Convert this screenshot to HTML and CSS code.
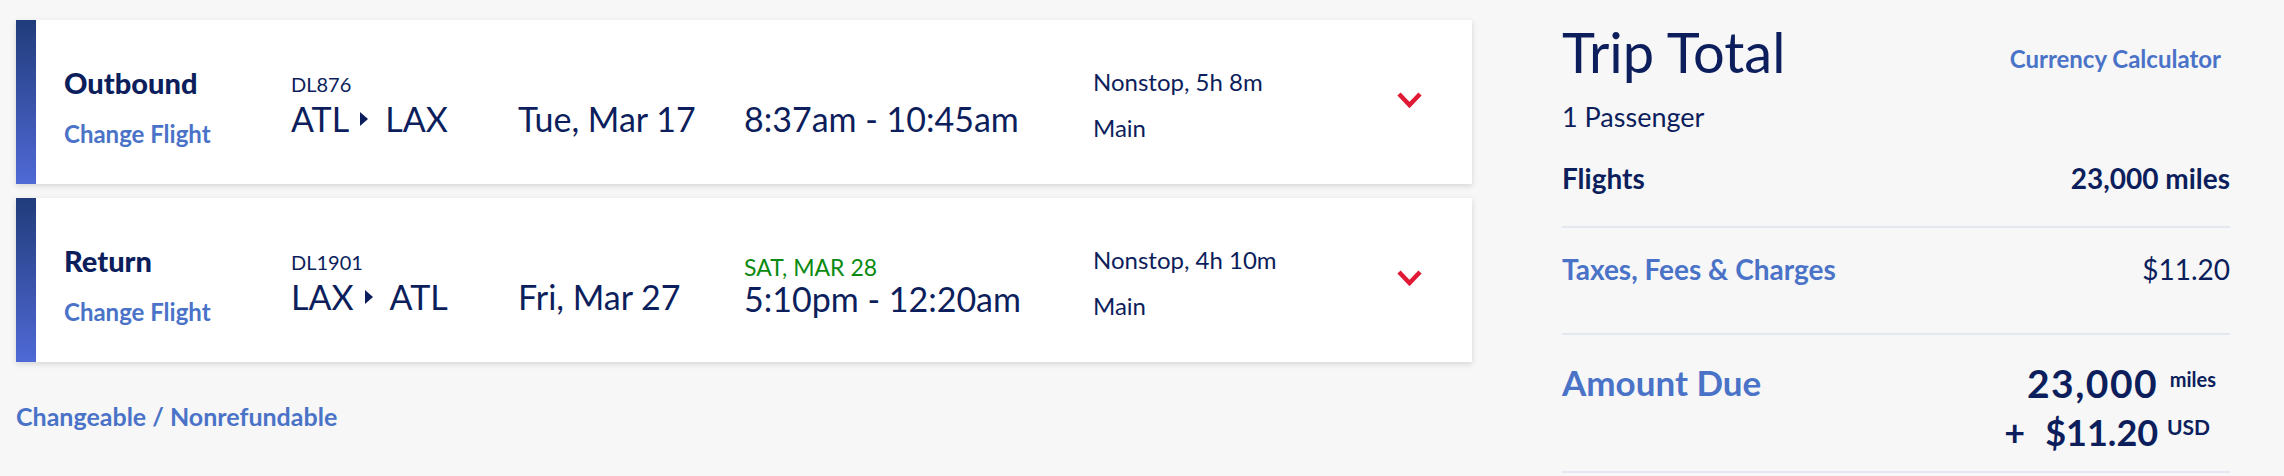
FILE: index.html
```html
<!DOCTYPE html>
<html lang="en">
<head>
    <meta charset="UTF-8">
    <meta name="viewport" content="width=device-width, initial-scale=1.0">
    <title>Trip Summary</title>
    <link rel="stylesheet" href="styles.css">
</head>
<body>
    <div class="page">
        <div class="flights">
            <div class="card">
                <div class="leg">
                    <div class="leg-name">Outbound</div>
                    <a class="link change" href="#">Change Flight</a>
                </div>
                <div class="stack">
                    <div class="small">DL876</div>
                    <div class="big route">ATL <span class="arrow"></span> LAX</div>
                </div>
                <div class="stack">
                    <div class="small"></div>
                    <div class="big">Tue, Mar 17</div>
                </div>
                <div class="stack">
                    <div class="small"></div>
                    <div class="big">8:37am - 10:45am</div>
                </div>
                <div class="info">
                    <div>Nonstop, 5h 8m</div>
                    <div class="cabin">Main</div>
                </div>
                <div class="toggle">
                    <svg width="25" height="16" viewBox="0 0 25 16"><polyline points="2,2 12.5,13 23,2" fill="none" stroke="#e01a35" stroke-width="4.5"/></svg>
                </div>
            </div>

            <div class="card">
                <div class="leg">
                    <div class="leg-name">Return</div>
                    <a class="link change" href="#">Change Flight</a>
                </div>
                <div class="stack">
                    <div class="small">DL1901</div>
                    <div class="big route">LAX <span class="arrow"></span> ATL</div>
                </div>
                <div class="stack">
                    <div class="small"></div>
                    <div class="big">Fri, Mar 27</div>
                </div>
                <div class="stack">
                    <div class="small next-day">SAT, MAR 28</div>
                    <div class="big">5:10pm - 12:20am</div>
                </div>
                <div class="info">
                    <div>Nonstop, 4h 10m</div>
                    <div class="cabin">Main</div>
                </div>
                <div class="toggle">
                    <svg width="25" height="16" viewBox="0 0 25 16"><polyline points="2,2 12.5,13 23,2" fill="none" stroke="#e01a35" stroke-width="4.5"/></svg>
                </div>
            </div>

            <a class="link fare-rules" href="#">Changeable / Nonrefundable</a>
        </div>

        <div class="summary">
            <div class="summary-head">
                <h1>Trip Total</h1>
                <a class="link calc" href="#">Currency Calculator</a>
            </div>
            <div class="passengers">1 Passenger</div>

            <div class="row first">
                <span class="label">Flights</span>
                <span class="value">23,000 miles</span>
            </div>
            <div class="row taxes">
                <a class="link label" href="#">Taxes, Fees &amp; Charges</a>
                <span class="value">$11.20</span>
            </div>
            <div class="row due">
                <span class="link due-label">Amount Due</span>
                <div class="due-amount">
                    <div class="miles-line"><span class="miles">23,000</span> <sup>miles</sup></div>
                    <div class="cash-line"><span class="plus">+</span>$11.20 <sup class="usd">USD</sup></div>
                </div>
            </div>
        </div>
    </div>
</body>
</html>
```

FILE: styles.css
```css
body {
    margin: 0;
    padding: 20px 0 0 16px;
    background-color: #f7f7f7;
    font-family: Lato, "Open Sans", sans-serif;
    color: #0c1e5c;
}

.page {
    display: flex;
    gap: 90px;
}

.flights {
    width: 1456px;
}

.link {
    color: #4a73c8;
    font-weight: 700;
    text-decoration: none;
}

/* flight cards */
.card {
    display: grid;
    grid-template-columns: 227px 227px 226px 349px 1fr 25px;
    align-items: start;
    height: 164px;
    box-sizing: border-box;
    padding: 47px 50px 0 48px;
    margin-bottom: 14px;
    background: #fff linear-gradient(to bottom, #213c7a, #4f69d6) no-repeat left top / 20px 100%;
    box-shadow: 0 2px 6px rgba(0, 0, 0, 0.14);
}

.leg-name {
    font-size: 29px;
    font-weight: 900;
    line-height: 32px;
}

.change {
    display: block;
    margin-top: 21px;
    font-size: 24px;
    line-height: 28px;
}

.small {
    height: 24px;
    margin-top: 5px;
    font-size: 20px;
    line-height: 24px;
}

.next-day {
    margin-top: 10px;
    font-size: 23px;
    color: #0b8a12;
}

.big {
    margin-top: 3px;
    font-size: 34px;
    line-height: 40px;
    white-space: nowrap;
}

.next-day + .big {
    margin-top: 0;
}

.route {
    display: flex;
    align-items: center;
}

.arrow {
    display: inline-block;
    width: 0;
    height: 0;
    margin: 0 17px 0 11px;
    border-left: 8px solid #0c1e5c;
    border-top: 7px solid transparent;
    border-bottom: 7px solid transparent;
}

.info {
    font-size: 24px;
    line-height: 30px;
}

.cabin {
    margin-top: 16px;
}

.toggle {
    margin-top: 25px;
}

.toggle svg {
    display: block;
}

.fare-rules {
    display: block;
    margin-top: 39px;
    font-size: 25px;
    line-height: 30px;
}

/* trip total */
.summary {
    width: 668px;
}

.summary-head {
    display: flex;
    justify-content: space-between;
    align-items: flex-start;
}

h1 {
    margin: 0;
    font-size: 56px;
    font-weight: 400;
    line-height: 64px;
}

.calc {
    margin: 25px 9px 0 0;
    font-size: 24px;
    line-height: 28px;
}

.passengers {
    margin-top: 17px;
    font-size: 27px;
    line-height: 32px;
}

.row {
    display: flex;
    justify-content: space-between;
    align-items: flex-start;
    border-bottom: 2px solid #e3e8f1;
    font-size: 28px;
    line-height: 32px;
}

.row.first {
    margin-top: 29px;
    padding-bottom: 32px;
    font-weight: 700;
}

.row.taxes {
    padding: 25px 0 48px;
}

.row.due {
    padding: 27px 0 10px;
}

.due-label {
    font-size: 35px;
    line-height: 40px;
}

.due-amount {
    padding: 1px 14px 0 0;
    text-align: right;
    font-weight: 700;
}

.miles-line {
    font-size: 39px;
    line-height: 40px;
}

.miles {
    letter-spacing: 1.5px;
    margin-right: 2px;
}

.cash-line {
    font-size: 36px;
    line-height: 58px;
}

.plus {
    margin-right: 20px;
}

sup {
    font-size: 20px;
    vertical-align: 11px;
    line-height: 0;
}

sup.usd {
    margin-right: 6px;
    font-size: 21px;
}
```
